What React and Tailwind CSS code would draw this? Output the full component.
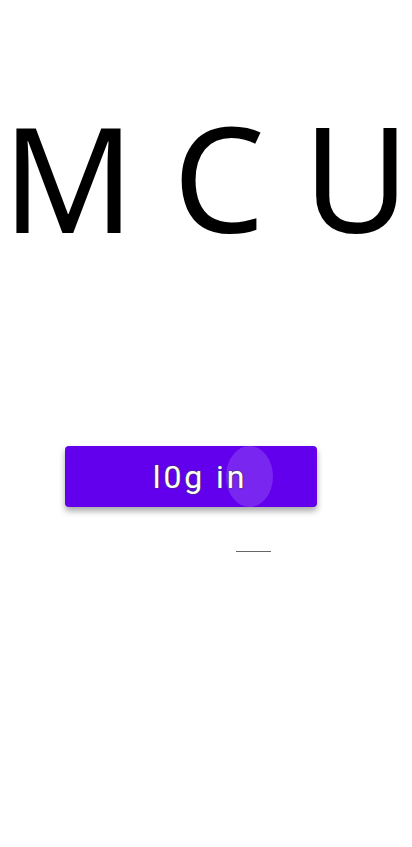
export default function App() {
  return (
    <div className="min-h-screen w-[412px] bg-white flex flex-col">
      {/* title */}
      <h1 className="mt-[104px] text-center text-[146px] leading-none text-black font-['Noto_Sans',sans-serif] whitespace-nowrap">
        M C U
      </h1>

      {/* login button */}
      <button
        type="button"
        className="relative mt-[196px] ml-[65px] w-[252px] h-[61px] rounded-[4px] bg-[#6200ee] overflow-hidden shadow-[0_4px_6px_rgba(0,0,0,0.35)] flex items-center justify-center pl-[18px]"
      >
        <span className="absolute left-[161px] top-0 h-[61px] w-[47px] rounded-[50%] bg-white/15" />
        <span className="relative text-[32px] leading-none tracking-[0.09em] text-white font-['Roboto',sans-serif] [text-shadow:0_0_2px_#444,0_0_1px_#444]">
          l0g in
        </span>
      </button>

      <div className="mt-[44px] ml-[236px] w-[35px] h-px bg-[#666]" />
    </div>
  );
}
